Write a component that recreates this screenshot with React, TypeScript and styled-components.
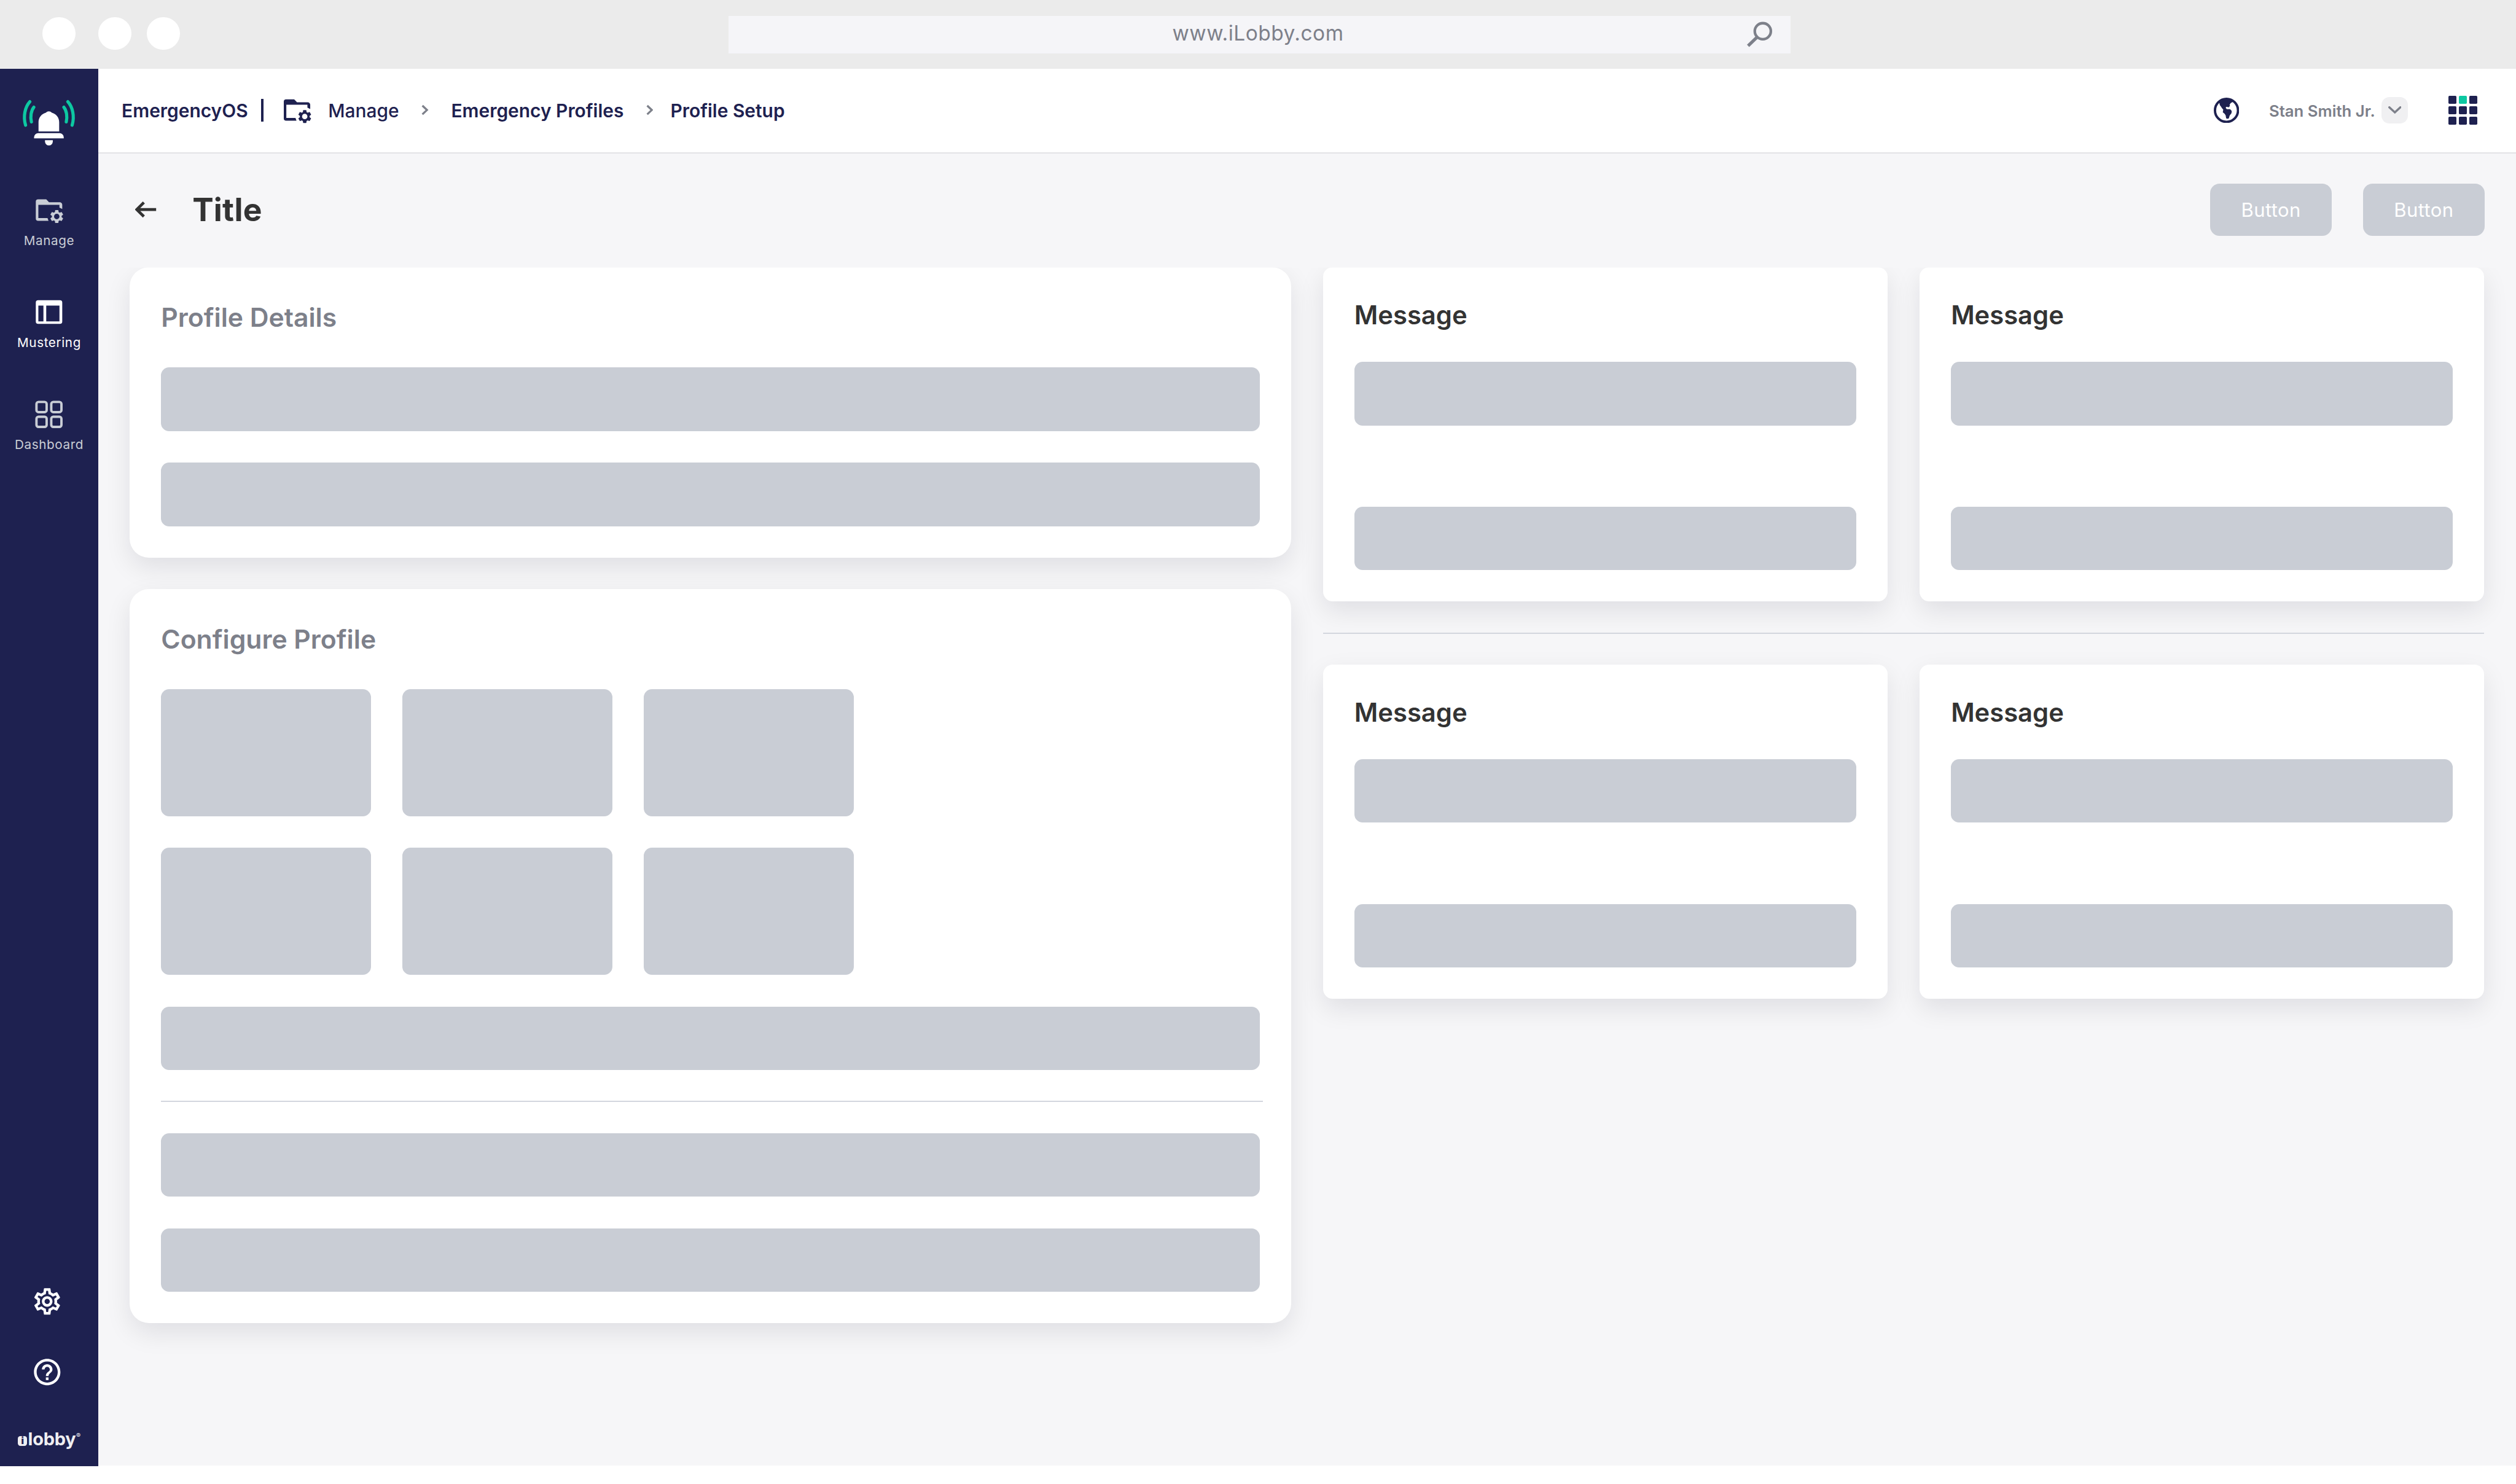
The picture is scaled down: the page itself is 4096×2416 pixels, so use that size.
import React from "react";
import styled, { createGlobalStyle } from "styled-components";
import { MdHelpOutline, MdOutlineSettings } from "react-icons/md";

const SCALE = 4096 / 4948;
const u = (n: number) => `${(n * SCALE).toFixed(3)}px`;

const color = {
  navy: "#1e2150",
  green: "#0dc8a2",
  block: "#c9cdd5",
  canvas: "#f6f6f8",
  chrome: "#ebebeb",
  grey: "#7d808a",
  ink: "#333333",
  line: "#e3e3e6",
  muted: "#c9cdd5",
};

const GlobalStyle = createGlobalStyle`
  * { box-sizing: border-box; }
  html, body { margin: 0; padding: 0; background: #fff; }
  body { font-family: Inter, "Liberation Sans", sans-serif; overflow: hidden; }
  svg { display: block; flex: none; }
`;

const Window = styled.div`
  width: 4096px;
  height: 2416px;
  display: flex;
  flex-direction: column;
  background: #fff;
`;

const BrowserBar = styled.div`
  flex: none;
  height: ${u(135.6)};
  display: flex;
  align-items: center;
  padding-left: ${u(83)};
  background: ${color.chrome};
`;

const Dot = styled.span<{ $after: number }>`
  width: ${u(65)};
  height: ${u(65)};
  margin: 0 ${(p) => u(p.$after)} ${u(3.8)} 0;
  border-radius: 50%;
  background: #fff;
`;

const AddressBar = styled.div`
  width: ${u(2088)};
  height: ${u(74)};
  display: grid;
  grid-template-columns: 1fr auto 1fr;
  align-items: center;
  padding: 0 ${u(35)} 0 ${u(29)};
  background: #f5f5f8;
  color: ${color.grey};
`;

const Url = styled.span`
  grid-column: 2;
  padding-bottom: ${u(4.4)};
  font-size: ${u(40.4)};
  line-height: ${u(56)};
  letter-spacing: ${u(0.6)};
`;

const SearchSlot = styled.span`
  justify-self: end;
`;

const Body = styled.div`
  flex: none;
  height: ${u(2747.5)};
  display: flex;
`;

const Sidebar = styled.nav`
  flex: none;
  width: ${u(193.3)};
  display: flex;
  flex-direction: column;
  align-items: center;
  padding: ${u(54.5)} 0 ${u(30)};
  background: ${color.navy};
`;

const NavList = styled.div`
  display: flex;
  flex-direction: column;
  gap: ${u(94.8)};
  margin-top: ${u(94)};
`;

const NavItem = styled.a<{ $active?: boolean }>`
  display: flex;
  flex-direction: column;
  align-items: center;
  gap: ${u(10.3)};
  color: ${(p) => (p.$active ? "#fff" : color.muted)};
`;

const NavLabel = styled.span`
  font-size: ${u(24.98)};
  line-height: ${u(33.2)};
  letter-spacing: ${u(0.75)};
`;

const NavTools = styled.div`
  display: flex;
  flex-direction: column;
  gap: ${u(76.6)};
  margin: auto ${u(7)} ${u(79.6)} 0;
  color: #fff;
  font-size: ${u(62.4)};
`;

const Brand = styled.div`
  display: flex;
  align-items: center;
  height: ${u(44)};
  color: #efeff2;
`;

const BrandBadge = styled.span`
  width: ${u(19)};
  height: ${u(19.6)};
  margin: ${u(6)} ${u(1.4)} 0 0;
  display: flex;
  align-items: center;
  justify-content: center;
  border-radius: ${u(5)};
  background: #efeff2;
  color: ${color.navy};
  font-size: ${u(18)};
  font-weight: 900;
  line-height: 1;
`;

const BrandName = styled.span`
  font-size: ${u(35)};
  font-weight: 700;
  line-height: ${u(44)};
  letter-spacing: ${u(-0.3)};
`;

const BrandMark = styled.span`
  align-self: flex-start;
  padding: ${u(8)} 0 0 ${u(0.8)};
  font-size: ${u(13)};
  line-height: ${u(14)};
`;

const Main = styled.main`
  flex: 1;
  height: ${u(2746.6)};
  min-width: 0;
  background: ${color.canvas};
`;

const Header = styled.header`
  height: ${u(166.4)};
  display: flex;
  align-items: center;
  padding: 0 ${u(76)} ${u(1.4)} ${u(46)};
  border-bottom: ${u(3)} solid ${color.line};
  background: #fff;
  color: ${color.navy};
`;

const Crumb = styled.span<{ $left?: number; $weight?: number }>`
  margin-left: ${(p) => u(p.$left ?? 0)};
  padding-top: ${u(1.8)};
  font-size: ${u(36.15)};
  line-height: ${u(50)};
  font-weight: ${(p) => p.$weight ?? 600};
  white-space: nowrap;
`;

const Separator = styled.span`
  width: ${u(4.6)};
  height: ${u(44)};
  margin: 0 ${u(40.3)} 0 ${u(26)};
  background: ${color.navy};
`;

const FolderSlot = styled.span`
  padding-top: ${u(4)};
`;

const ChevronSlot = styled.span`
  margin-left: ${u(44)};
`;

const HeaderTools = styled.div`
  display: flex;
  align-items: center;
  margin-left: auto;
`;

const UserName = styled.span`
  margin: 0 ${u(13)} 0 ${u(59)};
  padding-top: ${u(1.6)};
  color: ${color.grey};
  font-size: ${u(31.1)};
  line-height: ${u(40)};
  font-weight: 600;
  white-space: nowrap;
`;

const UserToggle = styled.button`
  width: ${u(51)};
  height: ${u(52)};
  display: flex;
  align-items: center;
  justify-content: center;
  margin: 0 ${u(80)} 0 0;
  padding: 0;
  border: 0;
  border-radius: ${u(15.6)};
  background: #f0f0f2;
`;

const AppGrid = styled.div`
  display: grid;
  grid-template-columns: repeat(3, ${u(15.8)});
  grid-auto-rows: ${u(15.8)};
  gap: ${u(4.9)};
`;

const AppCell = styled.span<{ $on: boolean }>`
  border-radius: ${u(2)};
  background: ${(p) => (p.$on ? color.green : color.navy)};
`;

const TitleRow = styled.div`
  display: flex;
  align-items: center;
  height: ${u(103)};
  margin: ${u(59)} ${u(62)} ${u(62)} ${u(73)};
`;

const Title = styled.h1`
  margin: 0 auto 0 ${u(69)};
  color: ${color.ink};
  font-size: ${u(62.4)};
  line-height: ${u(80)};
  font-weight: 700;
  letter-spacing: ${u(0.3)};
`;

const Button = styled.button`
  width: ${u(238.6)};
  height: ${u(103)};
  margin: 0 0 0 ${u(62)};
  padding: 0;
  border: 0;
  border-radius: ${u(18.7)};
  background: ${color.block};
  color: #fff;
  font: 400 ${u(37.46)} / ${u(50)} Inter, sans-serif;
  letter-spacing: ${u(0.5)};
`;

const Columns = styled.div`
  display: grid;
  grid-template-columns: ${u(2284.5)} ${u(2283.3)};
  column-gap: ${u(62.2)};
  align-items: start;
  padding-left: ${u(61.9)};
  clip-path: inset(0 0 ${u(-200)} 0);
`;

const Stack = styled.div<{ $gap: number }>`
  display: flex;
  flex-direction: column;
  gap: ${(p) => u(p.$gap)};
`;

const Pair = styled.div`
  display: grid;
  grid-template-columns: 1fr 1fr;
  gap: ${u(63.4)};
`;

const Card = styled.section<{ $radius: number; $height: number }>`
  height: ${(p) => u(p.$height)};
  padding: ${u(62.4)} ${u(61.6)} 0;
  border-radius: ${(p) => u(p.$radius)};
  background: #fff;
  box-shadow: 0 ${u(18.7)} ${u(50)} rgba(12, 12, 36, 0.095);
`;

const PanelTitle = styled.h2`
  margin: 0 0 ${u(61)};
  color: ${color.grey};
  font-size: ${u(51.5)};
  line-height: ${u(73.6)};
  font-weight: 600;
`;

const MessageTitle = styled.h2`
  margin: 0 0 ${u(59)};
  color: ${color.ink};
  font-size: ${u(50.4)};
  line-height: ${u(64.6)};
  font-weight: 600;
`;

const Bar = styled.div<{ $after?: number }>`
  height: ${u(124.9)};
  margin-bottom: ${(p) => u(p.$after ?? 62.4)};
  border-radius: ${u(16)};
  background: ${color.block};
`;

const Tiles = styled.div`
  display: grid;
  grid-template-columns: repeat(3, ${u(412.6)});
  grid-auto-rows: ${u(249.8)};
  gap: ${u(62.3)};
  margin-bottom: ${u(62.3)};
`;

const Tile = styled.div`
  border-radius: ${u(16)};
  background: ${color.block};
`;

const Rule = styled.div<{ $overhang?: number }>`
  height: 2px;
  margin-right: ${(p) => u(-(p.$overhang ?? 0))};
  background: #d3d6de;
`;

const InnerRule = styled(Rule)`
  margin-bottom: ${u(60.8)};
`;

const GEAR =
  "M19.14 12.94c.04-.3.06-.61.06-.94 0-.32-.02-.64-.07-.94l2.03-1.58c.18-.14.23-.41.12-.61l-1.92-3.32c-.12-.22-.37-.29-.59-.22l-2.39.96c-.5-.38-1.03-.7-1.62-.94l-.36-2.54c-.04-.24-.24-.41-.48-.41h-3.84c-.24 0-.43.17-.47.41l-.36 2.54c-.59.24-1.13.57-1.62.94l-2.39-.96c-.22-.08-.47 0-.59.22L2.74 8.87c-.12.21-.08.47.12.61l2.03 1.58c-.05.3-.09.63-.09.94s.02.64.07.94l-2.03 1.58c-.18.14-.23.41-.12.61l1.92 3.32c.12.22.37.29.59.22l2.39-.96c.5.38 1.03.7 1.62.94l.36 2.54c.05.24.24.41.48.41h3.84c.24 0 .44-.17.47-.41l.36-2.54c.59-.24 1.13-.56 1.62-.94l2.39.96c.22.08.47 0 .59-.22l1.92-3.32c.12-.22.07-.47-.12-.61l-2.01-1.58zM12 16c-2.2 0-4-1.8-4-4s1.8-4 4-4 4 1.8 4 4-1.8 4-4 4z";

const FolderShapes = () => (
  <g fill="currentColor">
    <path d="M75.5 392H91.5L97 397.6H118a5 5 0 0 1 5 5V410.8L117.5 408.3V402.6H76V428.6H94L96 434H75.5a4.5 4.5 0 0 1-4.5-4.5V396.5a4.5 4.5 0 0 1 4.5-4.5z" />
    <path transform="translate(112.2 425.7) scale(1.33) translate(-12 -12)" d={GEAR} />
  </g>
);

const FolderNavIcon = () => (
  <svg width={u(62.4)} height={u(62.4)} viewBox="65.8 384 62.4 62.4">
    <FolderShapes />
  </svg>
);

const FolderCrumbIcon = () => (
  <svg width={u(54)} height={u(48)} viewBox="71 391 54 48">
    <FolderShapes />
  </svg>
);

const PanelIcon = () => (
  <svg width={u(62.4)} height={u(62.4)} viewBox="65.8 584.7 62.4 62.4">
    <path
      fill="currentColor"
      fillRule="evenodd"
      d="M75.5 590.5H118.5a4.5 4.5 0 0 1 4.5 4.5V632.5a4.5 4.5 0 0 1-4.5 4.5H75.5a4.5 4.5 0 0 1-4.5-4.5V595a4.5 4.5 0 0 1 4.5-4.5zM76 601V632H86V601zM91.5 601V632H117.5V601z"
    />
  </svg>
);

const DashboardIcon = () => (
  <svg width={u(62.4)} height={u(62.4)} viewBox="65.8 785 62.4 62.4">
    <g fill="none" stroke="currentColor" strokeWidth="4.7">
      <rect x="72.3" y="790.3" width="20" height="20" rx="4" />
      <rect x="101.4" y="790.3" width="20" height="20" rx="4" />
      <rect x="72.3" y="819.4" width="20" height="20" rx="4" />
      <rect x="101.4" y="819.4" width="20" height="20" rx="4" />
    </g>
  </svg>
);

const BellIcon = () => (
  <svg width={u(110)} height={u(100)} viewBox="41.6 190 110 100">
    <g fill="none" stroke={color.green} strokeWidth="6.2" strokeLinecap="round">
      <path d="M59.3 200.3C50 210.5 45.5 229 50.8 246.5" />
      <path d="M67 211.2C61.5 218 60 230 62.3 240" />
      <path d="M133.9 200.3C143.2 210.5 147.7 229 142.4 246.5" />
      <path d="M126.2 211.2C131.7 218 133.2 230 130.9 240" />
    </g>
    <g fill="#fff">
      <path d="M76.3 259V240.5C76.3 231.5 82 224.5 90.6 221.9Q93.3 219.2 96.6 219.2T102.6 221.9C111.2 224.5 116.9 231.5 116.9 240.5V259z" />
      <path d="M67.5 272.5V270.5A8.3 8.3 0 0 1 75.8 262.2H117.6A8.3 8.3 0 0 1 125.9 270.5V272.5z" />
      <path d="M89 276.2H104.4V278.6A7.7 7.9 0 0 1 89 278.6z" />
    </g>
  </svg>
);

const SearchIcon = () => (
  <svg width={u(50)} height={u(50)} viewBox="3436 41.5 50 50">
    <g fill="none" stroke="currentColor" strokeWidth="5.2">
      <circle cx="3467.2" cy="60.6" r="15.8" />
      <path d="M3455.8 72.5L3438.2 89.5" strokeWidth="6.2" />
    </g>
  </svg>
);

const CrumbChevron = () => (
  <svg width={u(14)} height={u(22)} viewBox="0 0 14 22">
    <path d="M2 2.5L11 11L2 19.5" fill="none" stroke={color.grey} strokeWidth="4" />
  </svg>
);

const ToggleChevron = () => (
  <svg width={u(26)} height={u(15)} viewBox="0 0 26 15">
    <path d="M2.2 2L13 12L23.8 2" fill="none" stroke={color.grey} strokeWidth="4.2" strokeLinecap="round" />
  </svg>
);

const BackIcon = () => (
  <svg width={u(43)} height={u(34)} viewBox="265.5 396 43 34">
    <path
      d="M306.8 413H270M282.7 399.2L268.7 413L282.7 426.8"
      fill="none"
      stroke={color.ink}
      strokeWidth="5.6"
    />
  </svg>
);

const GlobeIcon = () => (
  <svg width={u(50)} height={u(50)} viewBox="42 36 150 150">
    <circle cx="117" cy="111" r="68" fill="none" stroke={color.navy} strokeWidth="14" />
    <path
      fill={color.navy}
      d="M66 62L75 68L78 80C84 86 90 98 98 107L95 122L106 131L112 140L115 157Q123 164 131 157L136 141L146 128Q149 119 147 113L138 104L119 104L113 98L114 90L120 90L130 93L138 84L135 79L142 68L152 62L164 58L152 46L117 40L82 46Z"
    />
  </svg>
);

const BarsPanel = () => (
  <Card $radius={38} $height={571.2}>
    <PanelTitle>Profile Details</PanelTitle>
    <Bar />
    <Bar />
  </Card>
);

const ConfigurePanel = () => (
  <Card $radius={38} $height={1444}>
    <PanelTitle>Configure Profile</PanelTitle>
    <Tiles>
      {Array.from({ length: 6 }, (_, i) => (
        <Tile key={i} />
      ))}
    </Tiles>
    <Bar $after={60.8} />
    <InnerRule $overhang={5} />
    <Bar />
    <Bar />
  </Card>
);

const MessageCard = () => (
  <Card $radius={19} $height={657.3}>
    <MessageTitle>Message</MessageTitle>
    <Bar $after={159.9} />
    <Bar />
  </Card>
);

const MessagePair = () => (
  <Pair>
    <MessageCard />
    <MessageCard />
  </Pair>
);

export default function App() {
  return (
    <Window>
      <GlobalStyle />
      <BrowserBar>
        <Dot $after={45} />
        <Dot $after={31} />
        <Dot $after={1079} />
        <AddressBar>
          <Url>www.iLobby.com</Url>
          <SearchSlot>
            <SearchIcon />
          </SearchSlot>
        </AddressBar>
      </BrowserBar>
      <Body>
        <Sidebar>
          <BellIcon />
          <NavList>
            <NavItem>
              <FolderNavIcon />
              <NavLabel>Manage</NavLabel>
            </NavItem>
            <NavItem $active>
              <PanelIcon />
              <NavLabel>Mustering</NavLabel>
            </NavItem>
            <NavItem>
              <DashboardIcon />
              <NavLabel>Dashboard</NavLabel>
            </NavItem>
          </NavList>
          <NavTools>
            <MdOutlineSettings />
            <MdHelpOutline />
          </NavTools>
          <Brand>
            <BrandBadge>i</BrandBadge>
            <BrandName>lobby</BrandName>
            <BrandMark>®</BrandMark>
          </Brand>
        </Sidebar>
        <Main>
          <Header>
            <Crumb>EmergencyOS</Crumb>
            <Separator />
            <FolderSlot>
              <FolderCrumbIcon />
            </FolderSlot>
            <Crumb $left={33} $weight={500}>
              Manage
            </Crumb>
            <ChevronSlot>
              <CrumbChevron />
            </ChevronSlot>
            <Crumb $left={44.5}>Emergency Profiles</Crumb>
            <ChevronSlot>
              <CrumbChevron />
            </ChevronSlot>
            <Crumb $left={34}>Profile Setup</Crumb>
            <HeaderTools>
              <GlobeIcon />
              <UserName>Stan Smith Jr.</UserName>
              <UserToggle>
                <ToggleChevron />
              </UserToggle>
              <AppGrid>
                {Array.from({ length: 9 }, (_, i) => (
                  <AppCell key={i} $on={i === 1} />
                ))}
              </AppGrid>
            </HeaderTools>
          </Header>
          <TitleRow>
            <BackIcon />
            <Title>Title</Title>
            <Button>Button</Button>
            <Button>Button</Button>
          </TitleRow>
          <Columns>
            <Stack $gap={61.4}>
              <BarsPanel />
              <ConfigurePanel />
            </Stack>
            <Stack $gap={60.8}>
              <MessagePair />
              <Rule />
              <MessagePair />
            </Stack>
          </Columns>
        </Main>
      </Body>
    </Window>
  );
}
